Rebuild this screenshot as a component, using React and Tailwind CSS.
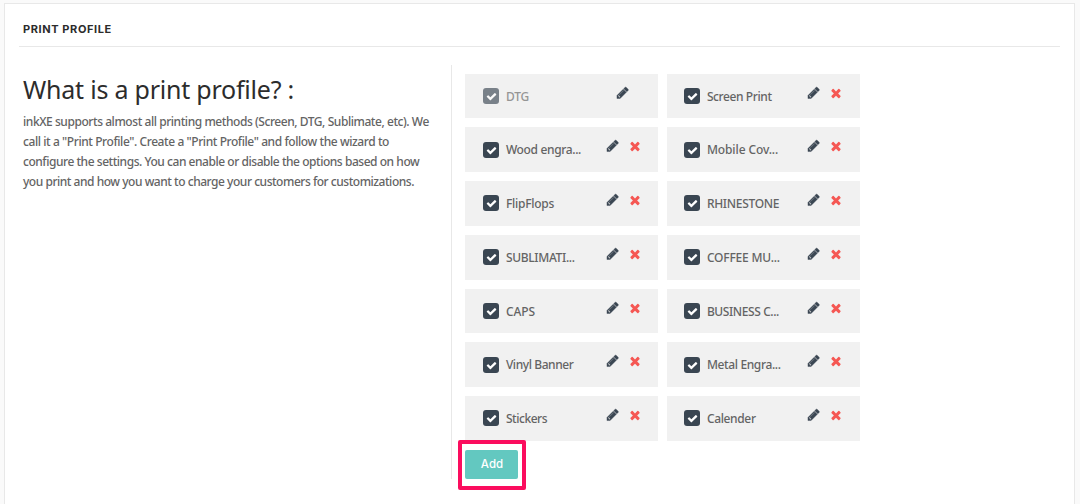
const PENCIL =
  "M491 1536l91-91-235-235-91 91v107h128v128h107zM1014 608q0-22-22-22-10 0-17 7l-542 542q-7 7-7 17 0 22 22 22 10 0 17-7l542-542q7-7 7-17zM960 416l416 416-832 832h-416v-416zM1643 512q0 53-37 90l-166 166-416-416 166-165q36-38 90-38 53 0 91 38l235 234q37 39 37 91z";
const TIMES =
  "M1490 1322q0 40-28 68l-136 136q-28 28-68 28t-68-28l-294-294-294 294q-28 28-68 28t-68-28l-136-136q-28-28-28-68t28-68l294-294-294-294q-28-28-28-68t28-68l136-136q28-28 68-28t68 28l294 294 294-294q28-28 68-28t68 28l136 136q28 28 28 68t-28 68l-294 294 294 294q28 28 28 68z";
const CHECK =
  "M1671 566q0 40-28 68l-724 724-136 136q-28 28-68 28t-68-28l-136-136-362-362q-28-28-28-68t28-68l136-136q28-28 68-28t68 28l294 295 656-657q28-28 68-28t68 28l136 136q28 28 28 68z";

function Icon({ d, className }) {
  return (
    <svg viewBox="0 0 1792 1792" fill="currentColor" className={className} aria-hidden="true">
      <path d={d} />
    </svg>
  );
}

const profiles = [
  { name: "DTG", track: "tracking-[-0.1px]", locked: true },
  { name: "Screen Print", track: "tracking-[-0.4px]" },
  { name: "Wood engra...", track: "tracking-[-0.35px]" },
  { name: "Mobile Cov...", track: "tracking-[-0.1px]" },
  { name: "FlipFlops", track: "tracking-[-0.25px]" },
  { name: "RHINESTONE", track: "tracking-[-0.3px]" },
  { name: "SUBLIMATI...", track: "tracking-[-0.33px]" },
  { name: "COFFEE MU...", track: "tracking-[-0.2px]" },
  { name: "CAPS", track: "tracking-[-0.1px]" },
  { name: "BUSINESS C...", track: "tracking-[-0.4px]" },
  { name: "Vinyl Banner", track: "tracking-[-0.42px]" },
  { name: "Metal Engra...", track: "tracking-[-0.37px]" },
  { name: "Stickers", track: "tracking-[-0.45px]" },
  { name: "Calender", track: "tracking-[-0.35px]" },
];

function ProfileCard({ name, track, locked }) {
  return (
    <div className="flex h-[44.75px] w-[193px] items-start bg-[#f1f1f1] pl-[18px] even:pl-[17.6px]">
      <div className={`flex w-[124px] shrink-0 items-start pt-[13px] ${locked ? "opacity-65" : ""}`}>
        <span className="mt-[1.4px] flex size-4 shrink-0 items-center justify-center rounded-[3px] bg-[#3a4652] text-white">
          <Icon d={CHECK} className="mt-px size-[11px]" />
        </span>
        <span className={`ml-[6.6px] whitespace-nowrap text-[12px] font-medium leading-[20px] text-[#646464] ${track}`}>
          {name}
        </span>
      </div>
      <Icon
        d={PENCIL}
        className={`mt-[12px] size-[13.5px] shrink-0 stroke-[#3a4652] stroke-[50] text-[#3a4652] ${locked ? "ml-[9px]" : "-ml-px"}`}
      />
      {!locked && <Icon d={TIMES} className="ml-[8.5px] mt-[12px] size-[14px] shrink-0 text-[#f55753]" />}
    </div>
  );
}

export default function App() {
  return (
    <div className="h-[504px] overflow-hidden bg-[#fafafa] pl-1 pt-[3px] font-['Noto_Sans',sans-serif]">
      <main className="h-[520px] w-[1071px] border border-[#e8e8e8] bg-white px-[14px]">
        <header className="h-[43px] border-b border-[#e8e8e8] pl-1 pt-[15px]">
          <h2 className="font-['Inter',sans-serif] text-[11px] font-bold leading-[21px] tracking-[0.6px] text-[#2c2c2c]">
            PRINT PROFILE
          </h2>
        </header>
        <div className="flex pt-[18px]">
          <section className="h-[414px] w-[433px] border-r border-[#e8e8e8] pl-1">
            <h1 className="mt-[8px] whitespace-nowrap text-[25px] leading-[32px] tracking-[-0.22px] text-[#2c2c2c]">
              What is a print profile? :
            </h1>
            <p className="mt-[7px] whitespace-nowrap text-[12px] font-medium leading-[20px] text-[#646464]">
              <span className="block tracking-[-0.44px]">inkXE supports almost all printing methods (Screen, DTG, Sublimate, etc). We</span>
              <span className="block tracking-[-0.42px]">call it a "Print Profile". Create a "Print Profile" and follow the wizard to</span>
              <span className="block tracking-[-0.46px]">configure the settings. You can enable or disable the options based on how</span>
              <span className="block tracking-[-0.47px]">you print and how you want to charge your customers for customizations.</span>
            </p>
          </section>
          <section className="pl-[13.3px] pt-[8.6px]">
            <div className="grid grid-cols-2 gap-x-[8.4px] gap-y-[9px]">
              {profiles.map((p) => (
                <ProfileCard key={p.name} {...p} />
              ))}
            </div>
            <div className="relative -ml-[7.3px] -mt-[0.85px] flex h-[50px] w-[68px] items-start rounded-[2px] border-4 border-[#fb0d5e] pl-[3px] pt-[6px]">
              <button className="h-[29px] w-[53px] rounded-[2px] bg-[#63c8c0] pl-px font-['Inter',sans-serif] text-[11.5px] font-medium text-white">
                Add
              </button>
            </div>
          </section>
        </div>
      </main>
    </div>
  );
}
